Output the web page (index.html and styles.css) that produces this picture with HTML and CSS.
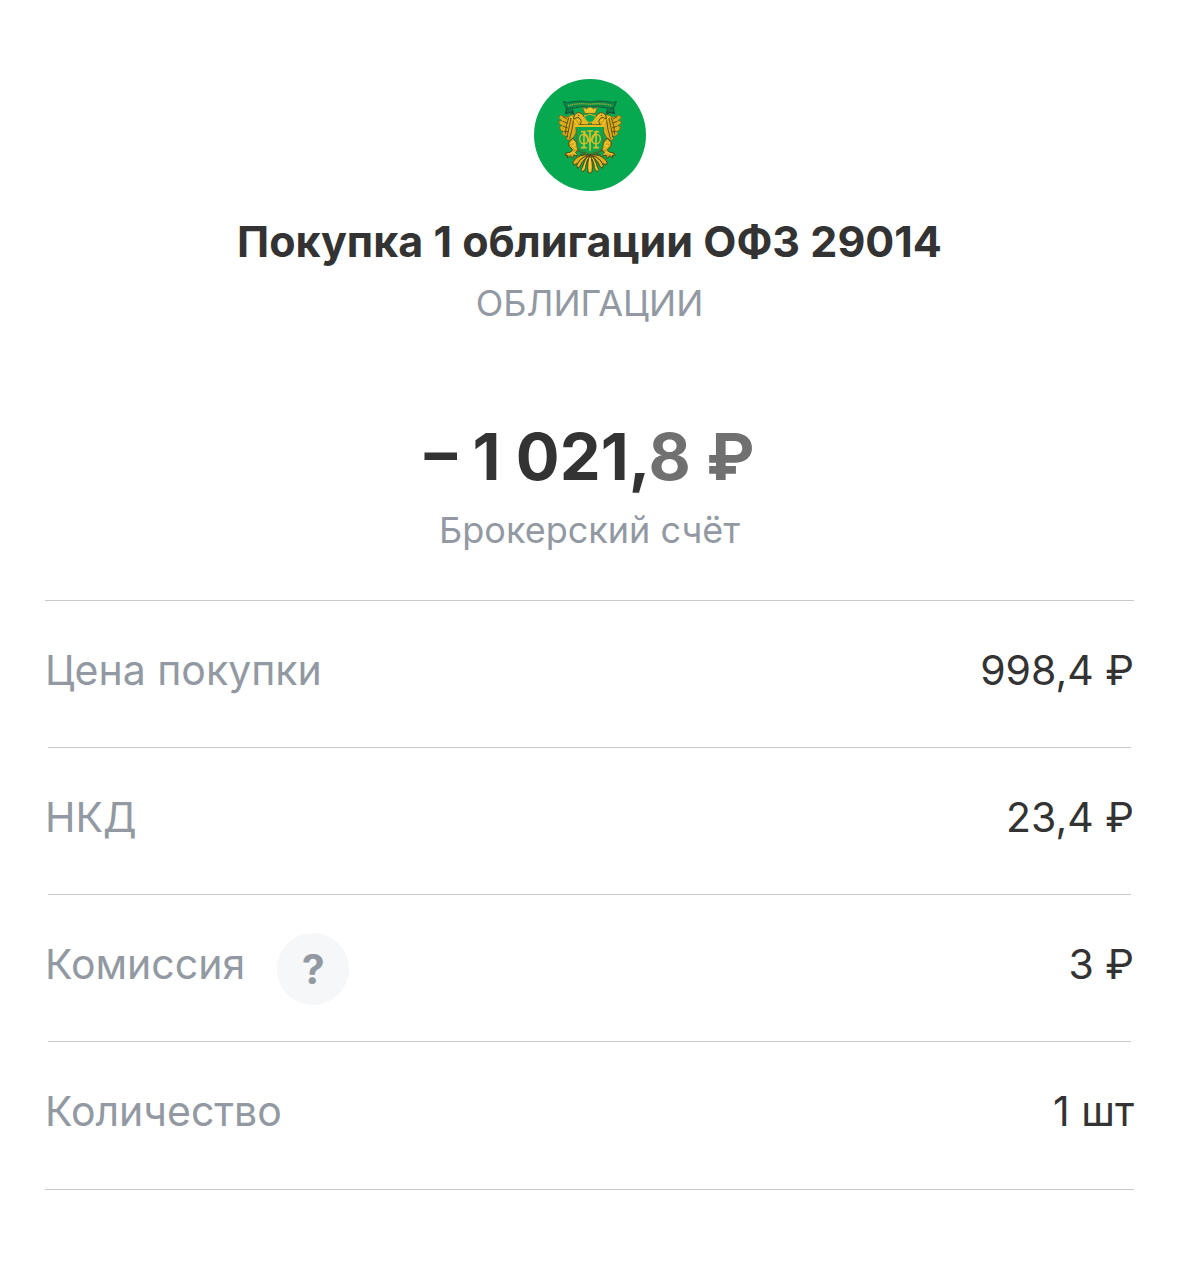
FILE: index.html
```html
<!DOCTYPE html>
<html lang="ru">
<head>
    <meta charset="UTF-8">
    <meta name="viewport" content="width=device-width, initial-scale=1.0">
    <title>Покупка 1 облигации ОФЗ 29014</title>
    <link rel="stylesheet" href="styles.css">
</head>
<body>
    <main class="operation">
        <header class="header">
            <svg class="logo" viewBox="12 12 336 336" aria-hidden="true">
                <defs>
                    <!-- left half of the eagle, mirrored below -->
                    <g id="half">
                        <path d="M138 124 L129 119 L119 122 L113 127 L91 121 L86 128 L96 137 L86 138 L88 147 L97 152 L88 155 L92 166 L101 170 L95 176 L104 183 L113 184 L108 192 L117 196 L129 189 L138 174 L142 151 L158 147 L174 148 L165 136 L157 124 Z" fill="#d9ac1a" stroke="#6f6418" stroke-width="2"/>
                        <path d="M116 129 L109 151 L106 177 M123 130 L117 158 L111 187 M130 137 L126 164 L119 190 M99 125 L111 132 M99 139 L111 144 M100 154 L112 158 M103 169 L114 170" stroke="#64500c" stroke-width="3"/>
                        <path d="M123 126 L134 137 L141 149 M134 125 L145 136 L160 141" stroke="#fbd334" stroke-width="3"/>
                        <path d="M132 125 Q136 111 149 113 Q160 116 164 128 Q169 137 178 142 L174 150 L150 149 Q157 139 151 132 L144 127 L131 132 Z" fill="#e4b925" stroke="#5e4e12" stroke-width="3"/>
                        <circle cx="146" cy="121" r="2" fill="#4c4214"/>
                        <path d="M128 190 L116 201 L117 214 L128 224 L122 232 L108 234 L105 241 L113 240 L112 249 L121 242 L128 250 L132 240 L141 243 L137 233 L144 224 L140 203 Z" fill="#d4a91e" stroke="#574915" stroke-width="3"/>
                        <path d="M122 205 L131 199 L136 211 L126 213 L138 221 M113 238 L128 232 L139 238" stroke="#f9d239" stroke-width="3"/>
                        <path d="M180 237 Q155 239 144 263 Q137 272 143 280 Q151 277 155 264 Q164 249 180 241" fill="#e0b51f" stroke="#4c4614" stroke-width="3"/>
                        <path d="M179 239 Q165 248 157 278 Q150 284 158 290 Q167 286 168 269 Q171 253 180 243" fill="#f1c72a" stroke="#4c4614" stroke-width="3"/>
                        <path d="M176 241 Q149 235 132 256 Q125 262 132 270 Q145 267 150 255 Q160 243 177 243" fill="#dcae1b" stroke="#4c4614" stroke-width="3"/>
                        <path d="M146 227 L158 235 L173 231 M150 239 L166 237" stroke="#3f6732" stroke-width="4"/>
                    </g>
                </defs>
                <circle cx="180" cy="180" r="168" fill="#06a850"/>
                <g fill="none" stroke-linecap="round" stroke-linejoin="round">
                    <use href="#half"/>
                    <use href="#half" transform="matrix(-1 0 0 1 360 0)"/>
                    <path d="M180 239 Q170 261 174 291 Q180 298 186 291 Q190 261 180 239 Z" fill="#f0c126" stroke="#4c4614" stroke-width="3"/>
                    <path d="M180 251 L180 284" stroke="#fce170" stroke-width="2"/>
                    <path d="M139 154 H221 L218 218 Q210 229 194 231 L180 237 L166 231 Q150 229 142 218 Z" fill="#06a850" stroke="#4f7a2b" stroke-width="3"/>
                    <path d="M136 153 H224" stroke="#e8bd24" stroke-width="6"/>
                    <path d="M164 122 Q180 114 196 122 Q197 137 180 144 Q163 137 164 122 Z" fill="#06a850" stroke="#dfb521" stroke-width="3"/>
                    <path d="M164 114 L158 96 L170 102 L180 90 L190 102 L202 96 L196 114 Z" fill="#edc12a" stroke="#776017" stroke-width="2"/>
                    <path d="M175 94 H185 M180 88 V102" stroke="#ffe255" stroke-width="3"/>
                    <!-- monogram on the shield -->
                    <path d="M162 217 V171 L180 203 L198 171 V217 M155 170 H165 M195 170 H205 M155 218 H168 M192 218 H205 M180 169 V226 M173 168 H187" stroke="#d9bd28" stroke-width="5"/>
                    <path d="M165 178 Q149 177 149 192 Q149 207 165 206 Q174 204 174 192 Q174 180 165 178 M195 178 Q211 177 211 192 Q211 207 195 206 Q186 204 186 192 Q186 180 195 178" stroke="#d9bd28" stroke-width="4"/>
                    <!-- ribbon -->
                    <path d="M110 99 L107 116 L120 112 L131 117 L127 105 M250 99 L253 116 L240 112 L229 117 L233 105" fill="#087c43" stroke="#17543a" stroke-width="4"/>
                    <path d="M101 80 Q112 86 125 80 Q153 75 180 81 Q207 75 235 80 Q248 86 259 80 L253 97 Q241 105 223 98 Q202 92 180 96 Q158 92 137 98 Q119 105 107 97 Z" fill="#078a47" stroke="#155d39" stroke-width="3"/>
                    <path d="M114 92 Q148 83 180 88 Q212 83 246 92" stroke="#8bad37" stroke-width="5" stroke-linecap="butt" stroke-dasharray="4 2 3 2"/>
                </g>
            </svg>
            <h1 class="title">Покупка 1 облигации ОФЗ 29014</h1>
            <p class="caption">ОБЛИГАЦИИ</p>
            <p class="amount">– 1 021,<span class="amount-minor">8 ₽</span></p>
            <p class="caption">Брокерский счёт</p>
        </header>

        <dl class="details">
            <div class="row">
                <dt class="label">Цена покупки</dt>
                <dd class="value">998,4 ₽</dd>
            </div>
            <div class="row">
                <dt class="label">НКД</dt>
                <dd class="value">23,4 ₽</dd>
            </div>
            <div class="row">
                <dt class="label-group">
                    <span class="label">Комиссия</span>
                    <button class="help" type="button" aria-label="О комиссии">?</button>
                </dt>
                <dd class="value">3 ₽</dd>
            </div>
            <div class="row">
                <dt class="label">Количество</dt>
                <dd class="value">1 шт</dd>
            </div>
        </dl>
    </main>
</body>
</html>
```

FILE: styles.css
```css
* {
    margin: 0;
    padding: 0;
    box-sizing: border-box;
}

body {
    font-family: Inter, 'Liberation Sans', sans-serif;
    background: #fff;
    color: #333;
}

.operation {
    padding: 79px 45px 83px;
}

.header {
    display: flex;
    flex-direction: column;
    align-items: center;
    padding-bottom: 48px;
    text-align: center;
}

.logo {
    width: 112px;
    height: 112px;
    margin-bottom: 24px;
}

.title {
    font-size: 43px;
    line-height: 52px;
    font-weight: 700;
}

.caption {
    margin-top: 14px;
    font-size: 36px;
    line-height: 44px;
    color: #9299a2;
}

.amount {
    margin-top: 92px;
    font-size: 65px;
    line-height: 80px;
    font-weight: 700;
}

.amount + .caption {
    margin-top: 11px;
}

.amount-minor {
    color: #707070;
}

.details {
    border-top: 1px solid #c8c9cb;
    border-bottom: 1px solid #c8c9cb;
}

/* the separator is a little shorter than the row text */
.row {
    display: flex;
    align-items: center;
    justify-content: space-between;
    min-height: 147px;
    background: linear-gradient(#c8c9cb, #c8c9cb) bottom center / calc(100% - 6px) 1px no-repeat;
}

.row:last-child {
    background: none;
}

.label,
.value {
    padding-bottom: 10px;
    font-size: 41px;
    line-height: 50px;
}

.label {
    color: #9299a2;
}

.label-group {
    display: flex;
    align-items: center;
    gap: 32px;
}

.help {
    width: 72px;
    height: 72px;
    border: none;
    border-radius: 50%;
    background: #f5f7f8;
    color: #9299a2;
    font-family: inherit;
    font-size: 41px;
    font-weight: 700;
    cursor: pointer;
}
```
